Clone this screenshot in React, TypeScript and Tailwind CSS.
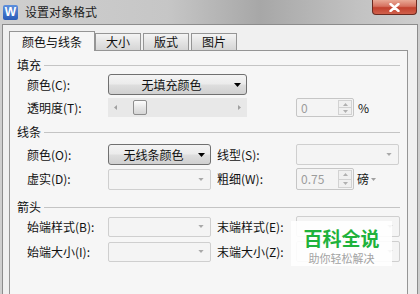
import type { ReactNode } from "react";

const Arrow = ({ color = "#000", w = 7, h = 4 }: { color?: string; w?: number; h?: number }) => (
  <svg width={w} height={h} viewBox="0 0 7 4">
    <path d="M0 0H7L3.5 4Z" fill={color} />
  </svg>
);

const SectionHeader = ({ label }: { label: string }) => (
  <div className="flex h-[14px] items-center">
    <span className="leading-none">{label}</span>
    <div className="ml-[3px] mr-[7px] h-px flex-1 bg-[#c4c4c4]" />
  </div>
);

const Label = ({ children, right = false }: { children: ReactNode; right?: boolean }) => (
  <span className={right ? "ml-[6px] w-[79px] shrink-0 whitespace-nowrap" : "w-[81px] shrink-0 whitespace-nowrap"}>
    {children}
  </span>
);

const ColorButton = ({ text, width }: { text: string; width: string }) => (
  <div
    className={`flex h-[21px] ${width} items-center rounded-[3px] border border-[#707070] bg-[linear-gradient(#f4f4f4_0%,#ebebeb_48%,#dedede_52%,#d0d0d0_100%)] pr-[5px]`}
  >
    <span className="flex-1 text-center leading-none">{text}</span>
    <Arrow />
  </div>
);

const Combo = ({ width = "w-[103px]", height = "h-[21px]" }: { width?: string; height?: string }) => (
  <div
    className={`flex ${height} ${width} items-center justify-end rounded-[2px] border border-[#cfcfcf] bg-[#f4f4f4] pr-[6px]`}
  >
    <Arrow color="#a9a9a9" w={6} h={3} />
  </div>
);

const Spin = ({ value, height = "h-[19px]" }: { value: string; height?: string }) => (
  <div className={`flex ${height} w-[58px] rounded-[2px] border border-[#c6c6c6] bg-[#f4f4f4]`}>
    <span className="flex flex-1 items-center pl-[4px] leading-none text-[#9c9c9c]">{value}</span>
    <div className="m-px flex w-[14px] flex-col border border-[#d2d2d2] bg-[#f0f0f0]">
      <div className="flex flex-1 items-center justify-center border-b border-[#d2d2d2]">
        <svg width="5" height="3" viewBox="0 0 5 3">
          <path d="M0 3H5L2.5 0Z" fill="#b0b0b0" />
        </svg>
      </div>
      <div className="flex flex-1 items-center justify-center">
        <Arrow color="#b0b0b0" w={5} h={3} />
      </div>
    </div>
  </div>
);

const Slider = () => (
  <div className="flex h-[19px] w-[139px] items-center bg-[#e8e8e8] px-[6px]">
    <svg width="3" height="5" viewBox="0 0 3 5">
      <path d="M3 0V5L0 2.5Z" fill="#a0a0a0" />
    </svg>
    <div className="ml-[16px] h-[15px] w-[14px] rounded-[2px] border border-[#8d8d8d] bg-[linear-gradient(#fdfdfd,#e6e6e6_50%,#d6d6d6)]" />
    <div className="flex-1" />
    <svg width="3" height="5" viewBox="0 0 3 5">
      <path d="M0 0V5L3 2.5Z" fill="#a0a0a0" />
    </svg>
  </div>
);

export default function App() {
  return (
    <div className="relative h-[294px] w-[420px] overflow-hidden bg-[linear-gradient(90deg,#cfcfcf_0%,#c6c6c6_40%,#a7a7a7_62%,#c2c2c2_85%,#cecece_100%)] text-[12px] text-[#111] [font-family:'Noto_Sans_CJK_SC','Liberation_Sans',sans-serif]">
      {/* title bar */}
      <div className="flex h-[24px] items-center pl-[3px]">
        <div className="flex h-[15px] w-[15px] items-center justify-center rounded-[2px] bg-[linear-gradient(#5d8fdc,#2a5cb8)] text-[12px] font-bold leading-none text-white [font-family:'Liberation_Sans',sans-serif]">
          W
        </div>
        <span className="ml-[7px] leading-none text-[#1c1c1c]">设置对象格式</span>
      </div>
      <div className="absolute right-[3px] top-0 flex h-[15px] w-[45px] items-center justify-center rounded-b-[4px] border border-t-0 border-[#6b2a20] bg-[linear-gradient(#e9a996_0%,#d67260_45%,#c2412e_55%,#d0614c_100%)]">
        <svg width="11" height="9" viewBox="0 0 11 9">
          <path d="M1.5 1L9.5 8M9.5 1L1.5 8" stroke="#fff" strokeWidth="2.4" strokeLinecap="round" />
        </svg>
      </div>

      {/* dialog body */}
      <div className="ml-[2px] h-[270px] w-[416px] border-l border-r border-t border-[#8c8c8c] bg-[#f0f0f0] pl-[6px] pt-[6px]">
        {/* tabs */}
        <div className="flex h-[19px] items-end">
          <div className="relative z-10 mb-[-1px] flex h-[20px] w-[86px] items-center justify-center border border-b-0 border-[#959595] bg-[#f6f6f6] leading-none">
            颜色与线条
          </div>
          {["大小", "版式", "图片"].map((t, i) => (
            <div
              key={t}
              className={`flex h-[17px] w-[46px] items-center justify-center border border-b-0 border-[#959595] bg-[linear-gradient(#f4f4f4,#e4e4e4_50%,#d5d5d5)] leading-none ${i > 0 ? "ml-[2px]" : ""}`}
            >
              {t}
            </div>
          ))}
        </div>

        {/* tab panel */}
        <div className="flex h-[250px] w-[399px] flex-col border border-[#959595] bg-[#f6f6f6] pl-[7px] pt-[7px]">
          <SectionHeader label="填充" />
          <div className="mt-[2px] flex items-center pl-[10px]">
            <Label>颜色(C):</Label>
            <ColorButton text="无填充颜色" width="w-[139px]" />
          </div>
          <div className="mt-[3px] flex items-center pl-[10px]">
            <Label>透明度(T):</Label>
            <Slider />
            <div className="ml-[49px]">
              <Spin value="0" />
            </div>
            <span className="ml-[4px] leading-none">%</span>
          </div>

          <div className="mt-[8px]">
            <SectionHeader label="线条" />
          </div>
          <div className="mt-[5px] flex items-center pl-[10px]">
            <Label>颜色(O):</Label>
            <ColorButton text="无线条颜色" width="w-[103px]" />
            <Label right>线型(S):</Label>
            <Combo />
          </div>
          <div className="mt-[3px] flex items-center pl-[10px]">
            <Label>虚实(D):</Label>
            <Combo />
            <Label right>粗细(W):</Label>
            <Spin value="0.75" height="h-[22px]" />
            <span className="ml-[3px] leading-none">磅</span>
            <span className="ml-[2px]">
              <Arrow color="#a0a0a0" w={5} h={3} />
            </span>
          </div>

          <div className="mt-[10px]">
            <SectionHeader label="箭头" />
          </div>
          <div className="mt-[2px] flex items-center pl-[10px]">
            <Label>始端样式(B):</Label>
            <Combo height="h-[20px]" />
            <Label right>末端样式(E):</Label>
            <Combo width="w-[104px]" />
          </div>
          <div className="mt-[4px] flex items-center pl-[10px]">
            <Label>始端大小(I):</Label>
            <Combo height="h-[20px]" />
            <Label right>末端大小(Z):</Label>
            <Combo width="w-[104px]" />
          </div>
        </div>
      </div>

      {/* watermark */}
      <div className="absolute left-[291px] top-[221px] flex h-[45px] w-[101px] flex-col items-center bg-white/90 pt-[7px]">
        <span className="text-[19px] font-bold leading-none text-[#1fb23c]">百科全说</span>
        <span className="mt-[6px] text-[11px] leading-none text-[#a3a3a3]">助你轻松解决</span>
      </div>
    </div>
  );
}
